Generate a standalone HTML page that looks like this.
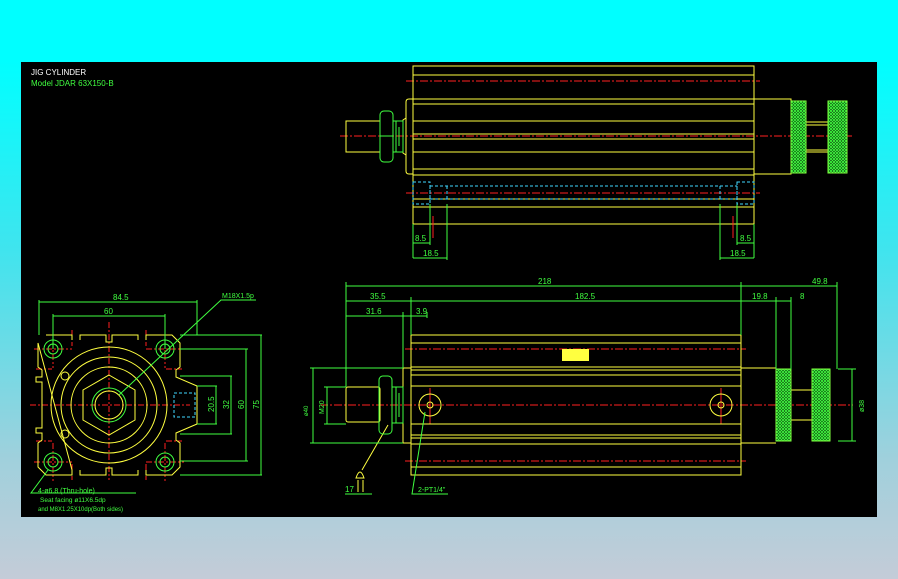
<!DOCTYPE html>
<html><head><meta charset="utf-8"><style>
html,body{margin:0;padding:0;width:898px;height:579px;overflow:hidden}
body{background:linear-gradient(180deg,#00ffff 0px,#00ffff 60px,#40e4ee 250px,#a0d0dc 460px,#c4ccd8 579px)}
svg{position:absolute;left:0;top:0}
text{font-family:"Liberation Sans",sans-serif}
</style></head><body>
<svg width="898" height="579" viewBox="0 0 898 579" xmlns="http://www.w3.org/2000/svg">
<defs>
<pattern id="h" width="3" height="3" patternUnits="userSpaceOnUse"><rect width="3" height="3" fill="#0a3a0a"/><path d="M0 0L3 3M3 0L0 3" stroke="#40ff40" stroke-width="0.8"/></pattern>
</defs>
<rect x="21" y="62" width="856" height="455" fill="#000"/>
<text x="31" y="75" fill="#fff" font-size="8">JIG CYLINDER</text>
<text x="31" y="86" fill="#40ff40" font-size="8">Model  JDAR  63X150-B</text>

<!-- TOP VIEW -->
<g fill="none" stroke-width="1">
<g stroke="#ff2020" stroke-dasharray="8 2 2 2">
<line x1="406" y1="81" x2="760" y2="81"/><line x1="340" y1="136" x2="853" y2="136"/><line x1="406" y1="193" x2="760" y2="193"/>
</g>
<g stroke="#ffff40">
<rect x="413" y="66" width="341" height="158"/>
<path d="M413 75H754M413 99H754M413 104H754M413 121H754M413 134H754M413 139H754M413 152H754M413 169H754M413 175H754M413 199H754M413 207H754"/>
<path d="M413 99H409Q406 99 406 102V171Q406 174 409 174H413"/>
<path d="M754 99H791V174H754"/>
<path d="M806 122H828M806 125H828M806 150H828M806 152H828"/>
<rect x="346" y="121" width="34" height="31"/>
<path d="M406 118L403 120V153L406 155"/>
</g>
<rect x="791" y="101" width="15" height="72" fill="url(#h)" stroke="#80ff40"/>
<rect x="828" y="101" width="19" height="72" fill="url(#h)" stroke="#80ff40"/>
<g stroke="#40ff40">
<rect x="380" y="111" width="13" height="51" rx="4"/>
<path d="M380 136H393M393 121H403V152H393M396 121V152M399 127V146"/>
<path d="M413 224V258M430 204V245M447 204V260M413 243H430M413 258H447M737 204V245M720 204V260M754 224V258M737 243H754M720 258H754"/>
</g>
<g stroke="#40d8ff" stroke-dasharray="3 2">
<rect x="413" y="182" width="17" height="22"/><rect x="737" y="182" width="17" height="22"/>
<path d="M430 186H737M430 199H737M430 186V200M447 186V200M720 186V200M737 186V200"/>
</g>
<g stroke="#ff2020"><path d="M433 216V238M733 216V238"/></g>
</g>
<g fill="#40ff40" font-size="8">
<text x="415" y="241">8.5</text><text x="423" y="256">18.5</text>
<text x="740" y="241">8.5</text><text x="730" y="256">18.5</text>
</g>

<!-- BOTTOM RIGHT VIEW -->
<g fill="none" stroke-width="1">
<g stroke="#ff2020" stroke-dasharray="8 2 2 2">
<line x1="405" y1="349" x2="746" y2="349"/><line x1="320" y1="405" x2="853" y2="405"/><line x1="405" y1="461" x2="746" y2="461"/>
<path d="M430 388V424M721 388V424" stroke-dasharray="none"/>
</g>
<g stroke="#ffff40">
<rect x="411" y="335" width="330" height="140"/>
<path d="M411 343H741M411 367H741M411 370H741M411 375H741M411 386H741M411 424H741M411 435H741M411 438H741M411 444H741M411 467H741"/>
<path d="M411 368H403V443H411M741 368H776M741 443H776"/>
<path d="M791 390H812M791 420H812"/>
<rect x="346" y="387" width="34" height="35" rx="2"/>
<circle cx="430" cy="405" r="11"/><circle cx="430" cy="405" r="3"/>
<circle cx="721" cy="405" r="11"/><circle cx="721" cy="405" r="3"/>
<path d="M388 425L362 470M358 480V492M363 480V492M356 478Q360 466 364 478Z"/>
</g>
<rect x="776" y="369" width="15" height="72" fill="url(#h)" stroke="#80ff40"/>
<rect x="812" y="369" width="18" height="72" fill="url(#h)" stroke="#80ff40"/>
<rect x="562" y="349" width="27" height="12" fill="#ffff40"/>
<g stroke="#40ff40">
<rect x="379" y="376" width="13" height="58" rx="4"/>
<path d="M392 387H403V423H392M396 387V423M399 393V417"/>
<path d="M346 282V387M741 282V335M837 282V369M411 297V335M403 312V368M776 297V369M791 297V369M427 312V318"/>
<path d="M346 286H741M741 286H837M346 301H411M411 301H741M741 301H776M776 301H791M346 316H403M403 316H427"/>
<path d="M838 369H856M838 441H856M852 369V441"/>
<path d="M313 368V443M310 368H403M310 443H403M327 387V424M324 387H346M324 424H346"/>
<path d="M425 412L412 494H448M345 494H372"/>
</g>
</g>
<g fill="#40ff40" font-size="8">
<text x="538" y="284">218</text><text x="812" y="284">49.8</text>
<text x="370" y="299">35.5</text><text x="575" y="299">182.5</text>
<text x="752" y="299">19.8</text><text x="800" y="299">8</text>
<text x="366" y="314">31.6</text><text x="416" y="314">3.9</text>
<text x="345" y="492">17</text><text x="418" y="492" font-size="7">2-PT1/4"</text>
<text transform="translate(864 412) rotate(-90)" font-size="7">ø38</text>
<text transform="translate(324 414) rotate(-90)" font-size="7">M20</text>
<text transform="translate(308 416) rotate(-90)" font-size="6">ø40</text>
</g>

<!-- LEFT END VIEW -->
<g fill="none" stroke-width="1">
<g stroke="#ff2020" stroke-dasharray="6 2 2 2">
<line x1="30" y1="405" x2="190" y2="405"/><line x1="109" y1="322" x2="109" y2="480"/>
<path d="M34 349H72M146 349H184M34 462H72M146 462H184M53 330V368M165 330V368M53 443V481M165 443V481M72 330V346M146 330V346M72 464V480M146 464V480M36 369H52M166 369H182M36 441H52M166 441H182"/>
</g>
<g stroke="#ffff40">
<path d="M46 335H72V340M80 340V335H106V342H112V335H138V340M146 340V335H172L180 343V367L176 370V377L197 386V424L176 433V440L180 443V467L172 475H146V470M138 470V475H112V468H106V475H80V470M72 470V475H46L38 467V443L42 440V433H36V428H42V382H36V377H42V370L38 367V343Z"/>
<circle cx="109" cy="405" r="58"/><circle cx="109" cy="405" r="48"/><circle cx="109" cy="405" r="38"/>
<path d="M109 375L135 390V420L109 435L83 420V390Z"/>
<circle cx="109" cy="405" r="14"/>
<circle cx="65" cy="376" r="4"/><circle cx="65" cy="434" r="4"/>
</g>
<g stroke="#40ff40">
<circle cx="109" cy="405" r="17"/>
<circle cx="53" cy="349" r="9"/><circle cx="53" cy="349" r="5"/>
<circle cx="165" cy="349" r="9"/><circle cx="165" cy="349" r="5"/>
<circle cx="53" cy="462" r="9"/><circle cx="53" cy="462" r="5"/>
<circle cx="165" cy="462" r="9"/><circle cx="165" cy="462" r="5"/>
<path d="M39 300V335M197 300V335M39 302H197M53 314V349M165 314V349M53 316H165"/>
<path d="M180 335H262M180 475H262M261 335V475M180 349H248M180 461H248M246 349V461M180 376H232M180 434H232M231 376V434M197 386H217M197 424H217M216 386V424"/>
<path d="M119 395L221 300H256M48 470L31 493H136"/>
</g>
<rect x="174" y="393" width="21" height="24" stroke="#40d8ff" stroke-dasharray="3 2"/>
</g>
<g fill="#40ff40" font-size="8">
<text x="113" y="300">84.5</text><text x="104" y="314">60</text>
<text x="222" y="298" font-size="7">M18X1.5p</text>
<text transform="translate(214 412) rotate(-90)">20.5</text>
<text transform="translate(229 409) rotate(-90)">32</text>
<text transform="translate(244 409) rotate(-90)">60</text>
<text transform="translate(259 409) rotate(-90)">75</text>
<text x="38" y="493" font-size="7">4-ø6.8 (Thru-hole)</text>
<text x="40" y="502" font-size="6.5">Seat facing ø11X6.5dp</text>
<text x="38" y="511" font-size="6">and M8X1.25X10dp(Both sides)</text>
</g>
</svg>
</body></html>
